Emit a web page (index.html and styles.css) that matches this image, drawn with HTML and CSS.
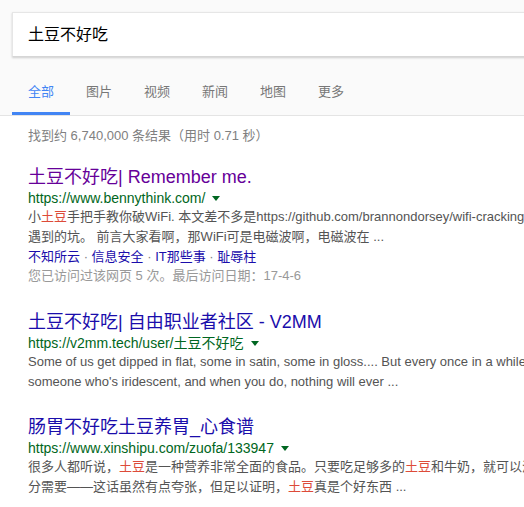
FILE: index.html
```html
<!DOCTYPE html>
<html lang="zh-CN">
<head>
<meta charset="utf-8">
<title>土豆不好吃 - 搜索</title>
<link rel="stylesheet" href="styles.css">
</head>
<body>
<div class="header">
  <div class="searchbox">土豆不好吃</div>
  <nav class="tabs">
    <span class="tab active">全部</span>
    <span class="tab">图片</span>
    <span class="tab">视频</span>
    <span class="tab">新闻</span>
    <span class="tab">地图</span>
    <span class="tab">更多</span>
  </nav>
</div>
<main class="content">
  <div class="stats">找到约 6,740,000 条结果（用时 0.71 秒）</div>

  <div class="result first">
    <a class="title visited">土豆不好吃| Remember me.</a>
    <div class="url">https://www.bennythink.com/<span class="arrow"></span></div>
    <div class="snippet">
      <div class="line">小<em>土豆</em>手把手教你破WiFi. 本文差不多是https://github.com/brannondorsey/wifi-cracking</div>
      <div class="line">遇到的坑。 前言大家看啊，那WiFi可是电磁波啊，电磁波在 ...</div>
    </div>
    <div class="sitelinks"><a>不知所云</a><span class="dot"> · </span><a>信息安全</a><span class="dot"> · </span><a>IT那些事</a><span class="dot"> · </span><a>耻辱柱</a></div>
    <div class="visits">您已访问过该网页 5 次。最后访问日期：17-4-6</div>
  </div>

  <div class="result">
    <a class="title">土豆不好吃| 自由职业者社区 - V2MM</a>
    <div class="url">https://v2mm.tech/user/土豆不好吃<span class="arrow"></span></div>
    <div class="snippet">
      <div class="line">Some of us get dipped in flat, some in satin, some in gloss.... But every once in a while</div>
      <div class="line">someone who's iridescent, and when you do, nothing will ever ...</div>
    </div>
  </div>

  <div class="result">
    <a class="title">肠胃不好吃土豆养胃_心食谱</a>
    <div class="url">https://www.xinshipu.com/zuofa/133947<span class="arrow"></span></div>
    <div class="snippet">
      <div class="line">很多人都听说，<em>土豆</em>是一种营养非常全面的食品。只要吃足够多的<em>土豆</em>和牛奶，就可以满</div>
      <div class="line">分需要——这话虽然有点夸张，但足以证明，<em>土豆</em>真是个好东西 ...</div>
    </div>
  </div>
</main>
</body>
</html>
```

FILE: styles.css
```css
html, body {
  margin: 0;
  padding: 0;
  background: #ffffff;
  overflow: hidden;
}
body {
  font-family: "Liberation Sans", Arial, "Noto Sans CJK SC", sans-serif;
  color: #222;
  width: 524px;
}
.header {
  background: #fafafa;
  border-bottom: 1px solid #e4e4e4;
  padding-top: 12px;
  width: 700px;
}
.searchbox {
  margin-left: 12px;
  height: 43px;
  width: 700px;
  background: #fff;
  border: 1px solid #e6e6e6;
  border-bottom-color: #d6d6d6;
  box-shadow: 0 1px 2px rgba(0, 0, 0, 0.18);
  box-sizing: content-box;
  padding-left: 15px;
  font-size: 16px;
  line-height: 44px;
  color: #000;
}
.tabs {
  display: flex;
  margin-top: 20px;
  padding-left: 12px;
}
.tab {
  padding: 7px 16px 12px;
  font-size: 13px;
  line-height: 16px;
  color: #777;
  border-bottom: 3px solid transparent;
}
.tab.active {
  color: #4285f4;
  border-bottom-color: #4285f4;
}
.content {
  padding-left: 28px;
  width: 700px;
}
.stats {
  margin-top: 10px;
  font-size: 13px;
  line-height: 20px;
  color: #808080;
  margin-bottom: 19px;
}
.result {
  margin-bottom: 23px;
}
.result.first {
  margin-bottom: 25px;
}
.title {
  display: block;
  font-size: 18px;
  line-height: 24px;
  color: #1a0dab;
  text-decoration: none;
  white-space: nowrap;
}
.title.visited {
  color: #660099;
}
.url {
  display: flex;
  align-items: center;
  font-size: 14px;
  line-height: 18px;
  color: #006621;
  white-space: nowrap;
}
.arrow {
  display: inline-block;
  margin-left: 7px;
  margin-top: 1px;
  width: 0;
  height: 0;
  border-left: 4px solid transparent;
  border-right: 4px solid transparent;
  border-top: 5px solid #006621;
}
.snippet {
  font-size: 13px;
  line-height: 20px;
  color: #545454;
}
.line {
  white-space: nowrap;
}
.snippet em {
  font-style: normal;
  color: #dd4b39;
}
.sitelinks {
  font-size: 13px;
  line-height: 20px;
  color: #1a0dab;
  white-space: nowrap;
}
.sitelinks .dot {
  color: #808080;
}
.visits {
  font-size: 13px;
  line-height: 18px;
  color: #999;
  white-space: nowrap;
}
```
